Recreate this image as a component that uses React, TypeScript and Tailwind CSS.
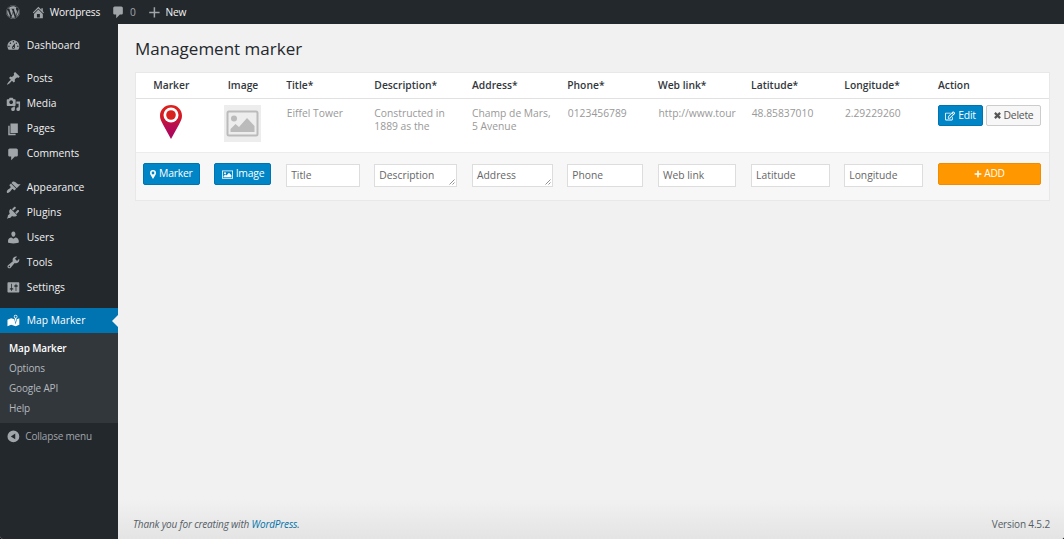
import type { ReactNode } from 'react'
import { FaWordpress, FaRegEdit, FaPlus } from 'react-icons/fa'

const icons = {
  home: 'M16 8.5l1.53 1.53-1.06 1.06L10 4.6l-6.47 6.49-1.06-1.06L10 2.5l4 4v-2h2v4zm-6-2.46l6 5.99V18H4v-5.97zM12 17v-5H8v5h4z',
  comments: 'M5 2h9q.82 0 1.41.59T16 4v7q0 .82-.59 1.41T14 13h-2l-5 5v-5H5q-.82 0-1.41-.59T3 11V4q0-.82.59-1.41T5 2z',
  plus: 'M17 9v2h-6v6H9v-6H3V9h6V3h2v6h6z',
  dashboard: 'M3.76 16h12.48c1.1-1.37 1.76-3.11 1.76-5 0-4.42-3.58-8-8-8s-8 3.58-8 8c0 1.89.66 3.63 1.76 5zM10 4c.55 0 1 .45 1 1s-.45 1-1 1-1-.45-1-1 .45-1 1-1zM6 6c.55 0 1 .45 1 1s-.45 1-1 1-1-.45-1-1 .45-1 1-1zm8 0c.55 0 1 .45 1 1s-.45 1-1 1-1-.45-1-1 .45-1 1-1zm-5.37 5.55L12 7v6c0 1.1-.9 2-2 2s-2-.9-2-2c0-.57.24-1.08.63-1.45zM4 10c.55 0 1 .45 1 1s-.45 1-1 1-1-.45-1-1 .45-1 1-1zm12 0c.55 0 1 .45 1 1s-.45 1-1 1-1-.45-1-1 .45-1 1-1zm-5 3c0-.55-.45-1-1-1s-1 .45-1 1 .45 1 1 1 1-.45 1-1z',
  post: 'M10.44 3.02l1.82-1.82 6.36 6.35-1.83 1.82c-1.05-.68-2.48-.57-3.41.36l-.75.75c-.92.93-1.04 2.35-.35 3.41l-1.83 1.82-2.41-2.41-2.8 2.79c-.42.42-3.38 2.71-3.8 2.29s1.86-3.39 2.28-3.81l2.79-2.79L4.1 9.36l1.83-1.82c1.05.69 2.48.57 3.4-.36l.75-.75c.93-.92 1.05-2.35.36-3.41z',
  media: 'M13 11V4c0-.55-.45-1-1-1h-1.67L9 1H5L3.67 3H2c-.55 0-1 .45-1 1v7c0 .55.45 1 1 1h10c.55 0 1-.45 1-1zM7 4.5c1.38 0 2.5 1.12 2.5 2.5S8.38 9.5 7 9.5 4.5 8.38 4.5 7 5.62 4.5 7 4.5zM14 6h5v10.5c0 1.38-1.12 2.5-2.5 2.5S14 17.88 14 16.5s1.12-2.5 2.5-2.5c.17 0 .34.02.5.05V9h-3V6zm-4 8.05V13h2v3.5c0 1.38-1.12 2.5-2.5 2.5S7 17.88 7 16.5 8.12 14 9.5 14c.17 0 .34.02.5.05z',
  page: 'M6 15V2h10v13H6zm-1 1h8v2H3V5h2v11z',
  appearance: 'M14.48 11.06L7.41 3.99l1.5-1.5c.5-.56 2.3-.47 3.51.32 1.21.8 1.43 1.28 2.91 2.1 1.18.64 2.45 1.26 4.45.85zm-.71.71L6.7 4.7 4.93 6.47c-.39.39-.39 1.02 0 1.41l1.06 1.06c.39.39.39 1.03 0 1.42-.6.6-1.43 1.11-2.21 1.69-.35.26-.7.53-1.01.84C1.43 14.23.4 16.08 1.4 17.07c.99 1 2.84-.03 4.18-1.36.31-.31.58-.66.85-1.02.57-.78 1.08-1.61 1.69-2.21.39-.39 1.02-.39 1.41 0l1.06 1.06c.39.39 1.02.39 1.41 0z',
  plugins: 'M13.11 4.36L9.87 7.6 8 5.73l3.24-3.24c.35-.34 1.05-.2 1.56.32.52.51.66 1.21.31 1.55zm-7.6 1.37l.71-.72 8.77 8.77-.71.71c-1.2 1.1-3 1.5-4.8 1l-1.3-.6-2.3 2.3c-.9.7-2 .2-2.5.4l-1.2.9-.8-.8 1-1.2c.2-.6-.3-1.7.4-2.5l2.3-2.3-.6-1.3c-.4-1.6 0-3.5 1.03-4.66zM12.4 10.13l3.24-3.24c.34-.35 1.04-.21 1.55.31.52.51.66 1.21.31 1.55l-3.24 3.25z',
  users: 'M10 9.25c-2.27 0-2.73-3.44-2.73-3.44C7 4.02 7.82 2 9.97 2c2.16 0 2.98 2.02 2.71 3.81 0 0-.41 3.44-2.68 3.44zm0 2.57L12.72 10c2.39 0 4.52 2.33 4.52 4.53v2.49s-3.65 1.13-7.24 1.13c-3.65 0-7.24-1.13-7.24-1.13v-2.49c0-2.25 1.94-4.48 4.47-4.48z',
  tools: 'M16.68 9.77c-1.34 1.34-3.3 1.67-4.95.99l-5.41 6.52c-.99.99-2.59.99-3.58 0s-.99-2.59 0-3.57l6.52-5.42c-.68-1.65-.35-3.61.99-4.95 1.28-1.28 3.12-1.62 4.72-1.06l-2.89 2.89 2.82 2.82 2.86-2.87c.53 1.58.18 3.39-1.08 4.65zM3.81 16.21c.4.39 1.04.39 1.43 0 .4-.4.4-1.04 0-1.43-.39-.4-1.03-.4-1.43 0-.39.39-.39 1.03 0 1.43z',
  settings: 'M18 16V4c0-.55-.45-1-1-1H3c-.55 0-1 .45-1 1v12c0 .55.45 1 1 1h14c.55 0 1-.45 1-1zM8 11h1c.55 0 1 .45 1 1s-.45 1-1 1H8v1.5c0 .28-.22.5-.5.5s-.5-.22-.5-.5V13H6c-.55 0-1-.45-1-1s.45-1 1-1h1V5.5c0-.28.22-.5.5-.5s.5.22.5.5V11zm5-2h-1c-.55 0-1-.45-1-1s.45-1 1-1h1V5.5c0-.28.22-.5.5-.5s.5.22.5.5V7h1c.55 0 1 .45 1 1s-.45 1-1 1h-1v5.5c0 .28-.22.5-.5.5s-.5-.22-.5-.5V9z',
  map: 'M13 13.14l1.17-5.94c.79-.43 1.33-1.25 1.33-2.2 0-1.38-1.12-2.5-2.5-2.5S10.5 3.62 10.5 5c0 .95.54 1.77 1.33 2.2zm0-9.64c.83 0 1.5.67 1.5 1.5s-.67 1.5-1.5 1.5-1.5-.67-1.5-1.5.67-1.5 1.5-1.5zm1.72 4.8L18 6.97v9L13.12 18 7 15.97l-5 2v-9l5-2 4.27 1.41 1.73 7.3z',
  collapse: 'M10 2a8 8 0 1 0 0 16 8 8 0 0 0 0-16zm2.5 4v8L6.5 10z',
}

type IconName = keyof typeof icons

const menu: { icon: IconName; label: string; gap?: boolean }[] = [
  { icon: 'dashboard', label: 'Dashboard' },
  { icon: 'post', label: 'Posts', gap: true },
  { icon: 'media', label: 'Media' },
  { icon: 'page', label: 'Pages' },
  { icon: 'comments', label: 'Comments' },
  { icon: 'appearance', label: 'Appearance', gap: true },
  { icon: 'plugins', label: 'Plugins' },
  { icon: 'users', label: 'Users' },
  { icon: 'tools', label: 'Tools' },
  { icon: 'settings', label: 'Settings' },
]

const fields = [
  { name: 'Title', value: 'Eiffel Tower' },
  { name: 'Description', value: 'Constructed in 1889 as the', area: true },
  { name: 'Address', value: 'Champ de Mars, 5 Avenue', area: true },
  { name: 'Phone', value: '0123456789' },
  { name: 'Web link', value: 'http://www.tour' },
  { name: 'Latitude', value: '48.85837010' },
  { name: 'Longitude', value: '2.29229260' },
]

const row =
  'grid grid-cols-[57px_57px_73.5px_83px_80.5px_76px_78.5px_78.5px_79px_103px] gap-x-[14.7px] pl-[6.800px]'

function Icon({ name, className = '' }: { name: IconName; className?: string }) {
  return (
    <svg viewBox="0 0 20 20" className={`size-[14.8px] shrink-0 ${className}`} fill="currentColor" fillRule="evenodd">
      <path d={icons[name]} />
    </svg>
  )
}

function BlueButton({ children, className = 'h-[22px]' }: { children: ReactNode; className?: string }) {
  return (
    <button
      className={`flex items-center justify-center gap-[3px] rounded-[2px] border border-[#0074b0] bg-[#0085c6] text-[10.400px] tracking-[-0.25px] text-white ${className}`}
    >
      {children}
    </button>
  )
}

function AdminBar() {
  return (
    <header className="flex h-6 items-center bg-[#23282d] pl-[6px] text-[10.200px] font-medium tracking-[-0.15px] text-[#f4f4f4]">
      <FaWordpress className="size-[14px] text-[#a0a5aa]" />
      <Icon name="home" className="ml-[11px] text-[#a0a5aa]" />
      <span className="ml-[4px] pt-px">Wordpress</span>
      <Icon name="comments" className="ml-[11px] text-[#a0a5aa]" />
      <span className="ml-[4px] pt-px font-normal text-[#a0a5aa]">0</span>
      <Icon name="plus" className="ml-[11px] text-[#a0a5aa]" />
      <span className="ml-[4px] pt-px">New</span>
    </header>
  )
}

function Sidebar() {
  return (
    <nav className="w-[118px] shrink-0 bg-[#23282d] pt-[9px] text-[10.300px] text-[#f1f1f1]">
      {menu.map((item) => (
        <div key={item.label} className={`flex h-[25.1px] items-center pl-[6px] ${item.gap ? 'mt-[8.200px]' : ''}`}>
          <Icon name={item.icon} className="text-[#a0a5aa]" />
          <span className="ml-[6px] font-medium">{item.label}</span>
        </div>
      ))}
      <div className="relative mt-[7.600px] flex h-[25px] items-center bg-[#0073b1] pl-[6px] text-white">
        <Icon name="map" />
        <span className="ml-[6px] pt-px font-medium">Map Marker</span>
        <span className="absolute top-[7px] right-0 border-y-[6px] border-r-[6px] border-y-transparent border-r-[#f1f1f1]" />
      </div>
      <ul className="bg-[#32373c] py-[5px] pl-[9px] text-[10px] leading-5 tracking-[-0.15px] text-[#b4b9be]">
        <li className="font-semibold text-white">Map Marker</li>
        <li>Options</li>
        <li>Google API</li>
        <li>Help</li>
      </ul>
      <div className="flex h-[26px] items-center pl-[6px] text-[10px] tracking-[-0.2px] text-[#a0a5aa]">
        <Icon name="collapse" />
        <span className="ml-[4.500px] pt-px">Collapse menu</span>
      </div>
    </nav>
  )
}

function MarkerPin() {
  return (
    <svg viewBox="0 0 24 36" className="mt-[5px] h-[36px] w-[24px] justify-self-center">
      <defs>
        <linearGradient id="pin" x1="0" y1="0" x2="0" y2="1">
          <stop offset="0" stopColor="#e0201b" />
          <stop offset="0.35" stopColor="#d11a24" />
          <stop offset="0.6" stopColor="#b80d50" />
          <stop offset="1" stopColor="#a80560" />
        </linearGradient>
      </defs>
      <path d="M12 1C5.700 1 1 5.800 1 11.800c0 3 1.200 5.500 3 8.600L12 35l8-14.600c1.800-3.100 3-5.600 3-8.600C23 5.800 18.300 1 12 1z" fill="url(#pin)" />
      <circle cx="12" cy="11" r="7.500" fill="#fff" />
      <circle cx="12" cy="11" r="4.800" fill="#d8201c" />
    </svg>
  )
}

function Placeholder() {
  return (
    <svg viewBox="0 0 37 37" className="mt-[6px] size-[37px] justify-self-center">
      <path fill="#ededed" d="M0 0h37v37H0z" />
      <rect x="3.500" y="6.500" width="30" height="24" rx="1.500" fill="none" stroke="#bbb" strokeWidth="2" />
      <circle cx="10" cy="13.500" r="3" fill="#bbb" />
      <path fill="#bbb" d="M6.500 27v-3l5-5 3.500 3 8-9 7.500 8v6z" />
    </svg>
  )
}

function MarkerTable() {
  return (
    <section className="mt-[10px] h-[129px] w-[915px] border border-[#e8e8e8] bg-[#f7f7f7] text-[10.300px]">
      <div className={`${row} h-[26px] items-center border-b border-[#e1e1e1] bg-white pt-px font-semibold text-[#32373c]`}>
        <span className="text-center">Marker</span>
        <span className="text-center">Image</span>
        {fields.map((f) => (
          <span key={f.name}>{f.name}*</span>
        ))}
        <span>Action</span>
      </div>
      <div className={`${row} h-[54px] items-start border-b border-[#ececec] bg-white text-[#999]`}>
        <MarkerPin />
        <Placeholder />
        {fields.map((f) => (
          <span key={f.name} className={`mt-[8px] leading-[13px] ${f.area ? '' : 'pl-[0.600px]'}`}>{f.value}</span>
        ))}
        <div className="mt-[6px] flex gap-[3px]">
          <BlueButton className="h-[21px] w-[45px]">
            <FaRegEdit className="size-[10px]" />
            Edit
          </BlueButton>
          <button className="flex h-[21px] w-[55px] items-center justify-center gap-[3px] rounded-[2px] border border-[#ccc] bg-[#f7f7f7] text-[10.400px] tracking-[-0.25px] text-[#555]">
            <svg viewBox="0 0 8 8" className="size-[7px]" stroke="currentColor" strokeWidth="2.500">
              <path d="M1 1l6 6M7 1L1 7" />
            </svg>
            Delete
          </button>
        </div>
      </div>
      <div className={`${row} items-start pt-[10px]`}>
        <BlueButton>
          <svg viewBox="0 0 6 9" className="h-[9px] w-[6px]" fill="currentColor" fillRule="evenodd">
            <path d="M3 0a3 3 0 0 0-3 3c0 .8.300 1.300.6 2L3 9l2.400-4c.3-.7.6-1.200.6-2a3 3 0 0 0-3-3zm0 1.600a1.400 1.400 0 1 1 0 2.800 1.400 1.400 0 0 1 0-2.800z" />
          </svg>
          Marker
        </BlueButton>
        <BlueButton>
          <svg viewBox="0 0 11 9" className="h-[9px] w-[11px]" fill="none">
            <rect x="0.400" y="0.900" width="10.200" height="7.400" stroke="currentColor" strokeWidth="0.800" />
            <circle cx="3" cy="3.200" r="1" fill="currentColor" />
            <path d="M1.600 7.200V6l1.700-1.600 1.100 1L7 2.800l2.400 2.400v2z" fill="currentColor" />
          </svg>
          Image
        </BlueButton>
        {fields.map((f) => (
          <label key={f.name} className="relative mt-px flex h-[23px] items-center border border-[#ddd] bg-white pl-[4px] text-[#666]">
            {f.name}
            {f.area && (
              <svg viewBox="0 0 6 6" className="absolute right-[1px] bottom-[1px] size-[6px]" stroke="#777" fill="none">
                <path d="M0.500 5.500l5-5M3.500 5.500l2-2" strokeWidth="0.800" />
              </svg>
            )}
          </label>
        ))}
        <button className="flex h-[22px] items-center justify-center gap-[2px] rounded-[2px] border border-[#f08c00] bg-[#ff9800] text-[10.200px] tracking-[-0.25px] text-white">
          <FaPlus className="size-[8px]" />
          ADD
        </button>
      </div>
    </section>
  )
}

export default function App() {
  return (
    <div className="bg-black">
      <div className="flex h-[539px] w-[1064px] flex-col overflow-hidden rounded-b-[3px] bg-[#f1f1f1] font-['Open_Sans',sans-serif]">
        <AdminBar />
        <div className="flex flex-1">
          <Sidebar />
          <main className="flex flex-1 flex-col pl-[17px]">
            <h1 className="pt-[12px] text-[17px] leading-[26px] text-[#23282d]">Management marker</h1>
            <MarkerTable />
            <footer className="mt-auto -ml-[17px] flex h-[40px] items-center justify-between bg-linear-to-b from-[#f1f1f1] to-[#e4e4e4] pt-[11px] pr-[14px] pl-[15px] text-[10px] tracking-[-0.15px] text-[#555d66]">
              <p className="tracking-[-0.17px] italic">
                Thank you for creating with <a className="font-medium text-[#0073aa]">WordPress</a>.
              </p>
              <p>Version 4.5.2</p>
            </footer>
          </main>
        </div>
      </div>
    </div>
  )
}
